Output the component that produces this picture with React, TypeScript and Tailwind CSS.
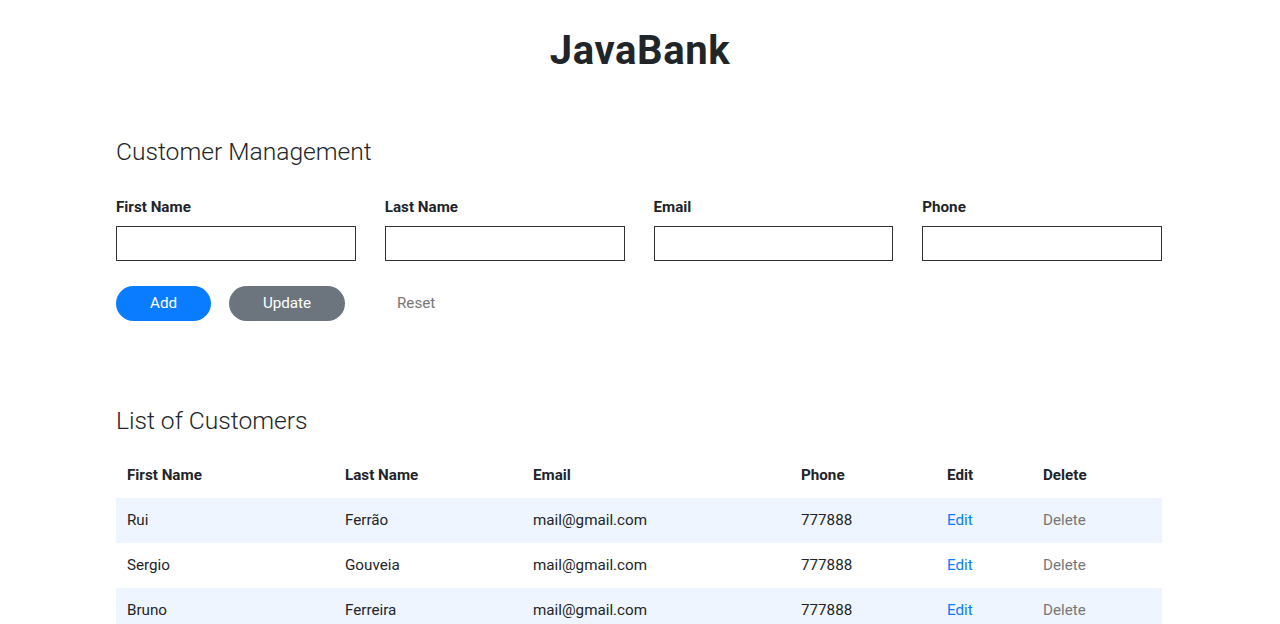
import React from 'react';

const customers = [
  { first: 'Rui', last: 'Ferrão', email: 'mail@gmail.com', phone: '777888' },
  { first: 'Sergio', last: 'Gouveia', email: 'mail@gmail.com', phone: '777888' },
  { first: 'Bruno', last: 'Ferreira', email: 'mail@gmail.com', phone: '777888' },
];

const fields = ['First Name', 'Last Name', 'Email', 'Phone'];

export default function App() {
  return (
    <div className="min-h-screen bg-white text-[#212529] font-['Roboto',sans-serif] text-[15.2px]">
      <h1 className="pt-[26px] text-center text-[40px] leading-[50px] font-bold tracking-[0.6px]">JavaBank</h1>

      <div className="ml-[116px] w-[1046px] pt-[60px]">
        <h2 className="text-[24.6px] leading-[32px] font-light">Customer Management</h2>

        <div className="mt-[29px] grid grid-cols-4 gap-x-[29px]">
          {fields.map(f => (
            <div key={f} className="flex flex-col">
              <label className="leading-[20px] font-bold">{f}</label>
              <input className="mt-[9px] h-[35px] border border-[#333] px-2 outline-none" />
            </div>
          ))}
        </div>

        <div className="mt-[25px] flex items-center">
          <button className="h-[35px] w-[95px] rounded-full bg-[#0a7cff] text-white">Add</button>
          <button className="ml-[18px] h-[35px] w-[116px] rounded-full bg-[#6c757d] text-white">Update</button>
          <button className="ml-[52px] text-[#777]">Reset</button>
        </div>

        <h2 className="mt-[84px] text-[24.6px] leading-[32px] font-light">List of Customers</h2>

        <table className="mt-[16px] w-full table-fixed border-collapse">
          <colgroup>
            <col className="w-[218px]" />
            <col className="w-[188px]" />
            <col className="w-[268px]" />
            <col className="w-[146px]" />
            <col className="w-[96px]" />
            <col className="w-[130px]" />
          </colgroup>
          <thead>
            <tr className="h-[45px] text-left">
              <th className="pl-[11px] font-bold">First Name</th>
              <th className="pl-[11px] font-bold">Last Name</th>
              <th className="pl-[11px] font-bold">Email</th>
              <th className="pl-[11px] font-bold">Phone</th>
              <th className="pl-[11px] font-bold">Edit</th>
              <th className="pl-[11px] font-bold">Delete</th>
            </tr>
          </thead>
          <tbody>
            {customers.map((c, i) => (
              <tr key={i} className={`h-[45px] ${i % 2 === 0 ? 'bg-[#eff5fe]' : 'bg-white'}`}>
                <td className="pl-[11px]">{c.first}</td>
                <td className="pl-[11px]">{c.last}</td>
                <td className="pl-[11px]">{c.email}</td>
                <td className="pl-[11px]">{c.phone}</td>
                <td className="pl-[11px] text-[#0a7cff]">Edit</td>
                <td className="pl-[11px] text-[#777]">Delete</td>
              </tr>
            ))}
          </tbody>
        </table>
      </div>
    </div>
  );
}
